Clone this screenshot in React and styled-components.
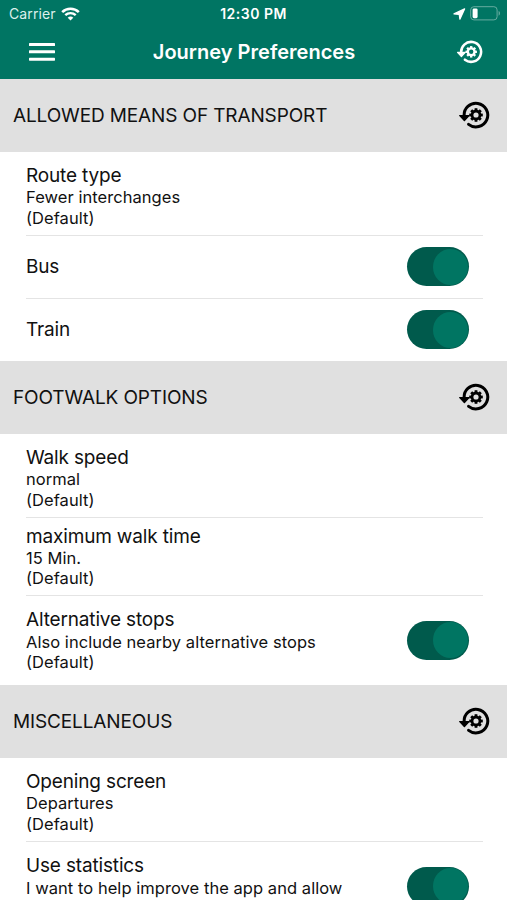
import styled, { createGlobalStyle } from 'styled-components'

const GlobalStyle = createGlobalStyle`
    * {
        box-sizing: border-box;
    }
    body {
        margin: 0;
        background: #fff;
        color: #111;
        font-family: Inter, "Liberation Sans", sans-serif;
    }
`

const Screen = styled.div`
    width: 100%;
    height: 900px;
    overflow: hidden;
    background: #fff;
`

const Header = styled.header`
    height: 79px;
    background: #007563;
    color: #fff;
`

const StatusBar = styled.div`
    display: grid;
    grid-template-columns: 1fr auto 1fr;
    align-items: center;
    height: 27px;
    padding: 0 6px 0 9px;
    font-size: 14px;
    line-height: 17px;
`

const Carrier = styled.div`
    display: flex;
    align-items: center;
    gap: 5.5px;
    letter-spacing: 0.1px;
    color: #dcf0ec;
`

const Clock = styled.span`
    font-weight: 600;
    font-size: 14px;
    letter-spacing: 0.5px;
    margin-right: 3px;
`

const StatusIcons = styled.div`
    display: flex;
    align-items: center;
    justify-content: flex-end;
    gap: 4px;
`

const NavBar = styled.div`
    display: grid;
    grid-template-columns: 60px 1fr 60px;
    align-items: center;
    height: 50px;
    padding: 0 24px 0 29px;
`

const Title = styled.h1`
    margin: 0 4px 0 0;
    font-size: 20px;
    line-height: 24px;
    font-weight: 600;
    letter-spacing: 0.02px;
    text-align: center;
    white-space: nowrap;
`

const NavAction = styled.div`
    display: flex;
    justify-content: flex-end;
`

const SectionHeader = styled.div`
    display: flex;
    align-items: center;
    justify-content: space-between;
    height: 73px;
    padding: 0 17px 1px 13px;
    background: #e0e0e0;
    color: #000;
`

const SectionTitle = styled.h2`
    margin: 1px 0 0;
    font-size: 19px;
    line-height: 24px;
    font-weight: 400;
    letter-spacing: -0.13px;
    color: #111;
`

const Rows = styled.div`
    padding: 0 24px 0 26px;
`

const Row = styled.div`
    display: flex;
    align-items: center;
    justify-content: space-between;
    height: ${props => props.$height}px;
    padding-right: 14px;
    padding-top: ${props => props.$top || 0}px;
    border-bottom: ${props => props.$last ? 'none' : '1.5px solid #e4e4e4'};
`

const Copy = styled.div`
    min-height: ${props => props.$tall ? '64px' : 'auto'};
`

const Label = styled.div`
    font-size: 19px;
    line-height: 23.5px;
    letter-spacing: -0.16px;
    white-space: nowrap;
`

const Detail = styled.div`
    font-size: 16.5px;
    line-height: 20.25px;
    letter-spacing: 0.05px;
    white-space: nowrap;
`

const Track = styled.div`
    display: flex;
    align-items: center;
    justify-content: flex-end;
    flex: none;
    width: 62.5px;
    height: 39px;
    padding-right: 1.5px;
    border-radius: 20px;
    background: #005a4c;
`

const Knob = styled.div`
    width: 35px;
    height: 36px;
    border-radius: 50%;
    background: #007562;
`

const sections = [
    {
        title: 'ALLOWED MEANS OF TRANSPORT',
        rows: [
            { label: 'Route type', details: ['Fewer interchanges', '(Default)'], height: 83.5, top: 5 },
            { label: 'Bus', toggle: true, height: 63 },
            { label: 'Train', toggle: true, height: 62.5 },
        ],
    },
    {
        title: 'FOOTWALK OPTIONS',
        rows: [
            { label: 'Walk speed', details: ['normal', '(Default)'], height: 83.5, top: 5 },
            { label: 'maximum walk time', details: ['15 Min.', '(Default)'], height: 78, top: 1 },
            { label: 'Alternative stops', details: ['Also include nearby alternative stops', '(Default)'], toggle: true, height: 89.5 },
        ],
    },
    {
        title: 'MISCELLANEOUS',
        rows: [
            { label: 'Opening screen', details: ['Departures', '(Default)'], height: 83.5, top: 5 },
            { label: 'Use statistics', details: ['I want to help improve the app and allow'], toggle: true, height: 89.5 },
        ],
    },
]

const teeth = [0, 45, 90, 135, 180, 225, 270, 315]

const ResetIcon = ({ width }) => (
    <svg width={width} height={width * 28 / 32} viewBox="0 0 32 28" fill="none" stroke="currentColor">
        <path d="M6.2 15.2A11.8 11.8 0 1 1 10.6 23.3" strokeWidth="3" strokeLinecap="round" />
        <path d="M1.8 14.6H11L6.4 19.6Z" fill="currentColor" strokeWidth="1.4" strokeLinejoin="round" />
        <circle cx="18" cy="14" r="4" strokeWidth="2.8" />
        {teeth.map(angle => (
            <path key={angle} d="M18 9.5V7.2" strokeWidth="2.8" transform={`rotate(${angle} 18 14)`} />
        ))}
    </svg>
)

const WifiIcon = () => (
    <svg width="19" height="14" viewBox="0 0 19 14" fill="none" stroke="#fff">
        <path d="M1.2 5.1C5.8.6 13.2.6 17.8 5.1" strokeWidth="2.6" />
        <path d="M4.3 8.2C7.2 5.4 11.8 5.4 14.7 8.2" strokeWidth="2.4" />
        <path d="M6.7 10.7C8.3 9.2 10.7 9.2 12.3 10.7L9.5 13.5Z" fill="#fff" stroke="none" />
    </svg>
)

const LocationIcon = () => (
    <svg width="13" height="12" viewBox="0 0 13 12" fill="#fff" stroke="#fff" strokeLinejoin="round">
        <path d="M11.6.9L1 5.9L6.2 6.5L6.9 11.2Z" strokeWidth="1.2" />
    </svg>
)

const BatteryIcon = () => (
    <svg width="31" height="15" viewBox="0 0 31 15" fill="none">
        <rect x=".7" y=".7" width="26.4" height="13.2" rx="3.2" stroke="#66aca0" />
        <rect x="2.6" y="2.4" width="5" height="9.8" rx="1.4" fill="#fff" />
        <path d="M28.6 5C30.4 5.7 30.4 9 28.6 9.7Z" fill="#66aca0" />
    </svg>
)

const MenuIcon = () => (
    <svg width="26" height="18" viewBox="0 0 26 18" fill="#fff">
        <rect y="0" width="26" height="3" rx=".6" />
        <rect y="7.3" width="26" height="3" rx=".6" />
        <rect y="14.7" width="26" height="3" rx=".6" />
    </svg>
)

const Toggle = () => (
    <Track>
        <Knob />
    </Track>
)

const Preference = ({ item, last }) => (
    <Row $height={item.height} $top={item.top} $last={last}>
        <Copy $tall={Boolean(item.details)}>
            <Label>{item.label}</Label>
            {item.details && item.details.map(text => <Detail key={text}>{text}</Detail>)}
        </Copy>
        {item.toggle && <Toggle />}
    </Row>
)

const App = () => {
    return (
        <Screen>
            <GlobalStyle />
            <Header>
                <StatusBar>
                    <Carrier>
                        Carrier
                        <WifiIcon />
                    </Carrier>
                    <Clock>12:30 PM</Clock>
                    <StatusIcons>
                        <LocationIcon />
                        <BatteryIcon />
                    </StatusIcons>
                </StatusBar>
                <NavBar>
                    <MenuIcon />
                    <Title>Journey Preferences</Title>
                    <NavAction>
                        <ResetIcon width={27} />
                    </NavAction>
                </NavBar>
            </Header>
            {sections.map(section => (
                <section key={section.title}>
                    <SectionHeader>
                        <SectionTitle>{section.title}</SectionTitle>
                        <ResetIcon width={32} />
                    </SectionHeader>
                    <Rows>
                        {section.rows.map((item, i) => (
                            <Preference key={item.label} item={item} last={i === section.rows.length - 1} />
                        ))}
                    </Rows>
                </section>
            ))}
        </Screen>
    )
}

export default App
